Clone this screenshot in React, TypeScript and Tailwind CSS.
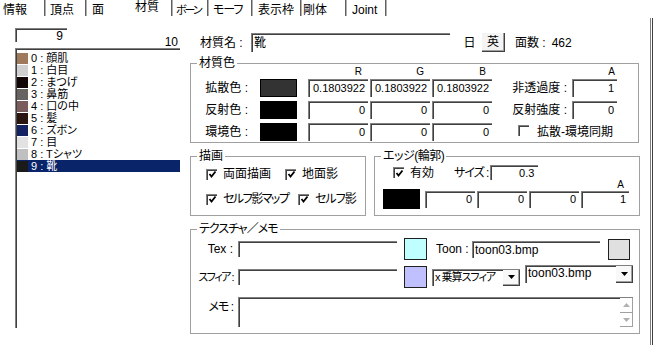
const sunken =
  "border-t border-l border-[#808080] shadow-[inset_1px_1px_0_#404040] bg-white";

const tabs = [
  { label: "情報", cls: "w-[44px] pl-[3px]", sep: true },
  { label: "頂点", cls: "w-[39px] pl-[4px]", sep: true },
  { label: "面", cls: "w-[48px] pl-[5px]", sep: false },
  { label: "材質", cls: "w-[36px] pl-0", sep: true, selected: true },
  { label: "ボーン", cls: "w-[34px] pl-[3px] text-[11px] tracking-[-2px]", sep: true },
  { label: "モーフ", cls: "w-[42px] pl-[4px] tracking-[-1px]", sep: true },
  { label: "表示枠", cls: "w-[47px] pl-[5px]", sep: true },
  { label: "剛体", cls: "w-[43px] pl-[1px]", sep: true },
  { label: "Joint", cls: "w-[38px] pl-[5px]", sep: true },
];

const materials = [
  { name: "顔肌", color: "#a07a5c" },
  { name: "白目", color: "#d0d0d0" },
  { name: "まつげ", color: "#120606" },
  { name: "鼻筋", color: "#686260" },
  { name: "口の中", color: "#7a5c5c" },
  { name: "髪", color: "#2a1410" },
  { name: "ズボン", color: "#142262" },
  { name: "目", color: "#e2e2e2" },
  { name: "Tシャツ", color: "#c0c0c0" },
  { name: "靴", color: "#1a1a1a" },
];

function Field({ value, className }: { value?: string; className: string }) {
  return (
    <div
      className={`${sunken} ${className} flex shrink-0 items-center justify-end pr-[3px] text-[11px] leading-none`}
    >
      {value}
    </div>
  );
}

function Check({ checked }: { checked?: boolean }) {
  return (
    <span className="inline-flex h-[11px] w-[11px] shrink-0 items-center justify-center border-t border-l border-[#808080] bg-white shadow-[inset_1px_1px_0_#404040]">
      {checked && (
        <svg width="9" height="9" viewBox="0 0 9 9">
          <path d="M1.5 4 L3.5 6.5 L7.5 1.5" fill="none" stroke="#000" strokeWidth="1.8" />
        </svg>
      )}
    </span>
  );
}

function Group({
  title,
  className,
  children,
  titleClass = "",
}: {
  title: string;
  className: string;
  children: React.ReactNode;
  titleClass?: string;
}) {
  return (
    <div className={`relative shrink-0 border border-[#a0a0a0] ${className}`}>
      <span
        className={`absolute top-[-8px] left-[6px] whitespace-nowrap bg-white px-[2px] leading-[14px] ${titleClass}`}
      >
        {title}
      </span>
      {children}
    </div>
  );
}

function Arrow({ color = "#000" }: { color?: string }) {
  return (
    <svg width="7" height="4" viewBox="0 0 7 4">
      <path d="M0 0 H7 L3.5 4 Z" fill={color} />
    </svg>
  );
}

function Combo({
  text,
  className,
  textClass = "",
}: {
  text: string;
  className: string;
  textClass?: string;
}) {
  return (
    <div className={`${sunken} ${className} flex shrink-0 items-stretch`}>
      <span className={`flex-1 overflow-hidden whitespace-nowrap pl-[2px] leading-[15px] ${textClass}`}>
        {text}
      </span>
      <span className="flex w-[17px] shrink-0 items-center justify-center border-r border-b border-[#404040] bg-[#f8f8f8] shadow-[inset_-1px_-1px_0_#a0a0a0]">
        <Arrow />
      </span>
    </div>
  );
}

export default function App() {
  return (
    <div className="h-[345px] w-[656px] overflow-hidden bg-white text-[12px] leading-[14px] text-black font-['Liberation_Sans','Noto_Sans_CJK_JP',sans-serif] [font-feature-settings:'palt']">
      {/* tab strip */}
      <div className="flex h-[18px] items-start">
        {tabs.map((t) => (
          <div key={t.label} className="flex items-start">
            <div className={`${t.cls} ${t.selected ? "pt-0" : "pt-[3px]"} whitespace-nowrap`}>
              {t.label}
            </div>
            {t.sep && <div className="h-[16px] w-[2px] border-l border-[#606060] border-r border-r-[#b0b0b0]" />}
          </div>
        ))}
      </div>

      <div className="flex h-[327px]">
        {/* material list */}
        <div className="ml-[15px] flex w-[165px] flex-col">
          <div className="mt-[10px] flex h-[20px] items-start justify-between">
            <div className={`${sunken} h-[14px] w-[52px] pr-[4px] text-right leading-[14px]`}>9</div>
            <div className="mt-[7px] pr-[2px]">10</div>
          </div>
          <div className={`${sunken} h-[280px] pt-[3px] pl-[1px]`}>
            {materials.map((m, i) => {
              const sel = i === 9;
              return (
                <div
                  key={m.name}
                  className={`flex h-[12px] items-center text-[11px] leading-[12px] ${sel ? "bg-[#0a246a] text-white" : ""}`}
                >
                  <span className="h-[11px] w-[11px] shrink-0" style={{ background: m.color }} />
                  <span className="ml-[3px] whitespace-nowrap">
                    {i} : {m.name}
                  </span>
                </div>
              );
            })}
          </div>
        </div>

        {/* properties */}
        <div className="ml-[10px] flex w-[450px] flex-col">
          <div className="mt-[15px] flex h-[19px] items-center">
            <span className="ml-[10px] w-[51px] whitespace-nowrap">材質名 :</span>
            <div className={`${sunken} h-[19px] w-[199px] pl-[2px] leading-[18px]`}>靴</div>
            <div className="ml-[7px] flex h-[19px] w-[25px] items-center justify-center">日</div>
            <div className="flex h-[19px] w-[23px] items-center justify-center border-r border-b border-[#404040] bg-[#f4f4f4] shadow-[inset_-1px_-1px_0_#a0a0a0]">
              英
            </div>
            <span className="ml-[10px]">面数 :</span>
            <span className="ml-[6px]">462</span>
          </div>

          <Group title="材質色" className="mt-[11px] h-[80px] w-[449px]">
            <div className="mt-[1px] flex h-[12px] items-end text-[10px] leading-[10px]">
              <div className="w-[117px] shrink-0" />
              <div className="w-[60px] pr-[6px] text-right">R</div>
              <div className="ml-[2px] w-[60px] pr-[6px] text-right">G</div>
              <div className="ml-[2px] w-[60px] pr-[6px] text-right">B</div>
              <div className="w-[80px] shrink-0" />
              <div className="w-[45px] pr-[2px] text-right">A</div>
            </div>
            <div className="mt-[2px] flex flex-col gap-[4px]">
              <div className="flex h-[18px] items-center">
                <span className="w-[57px] shrink-0 text-right">拡散色 :</span>
                <span className="ml-[12px] h-[18px] w-[37px] shrink-0 border border-black bg-[#333333]" />
                <Field value="0.1803922" className="ml-[11px] h-[18px] w-[60px]" />
                <Field value="0.1803922" className="ml-[2px] h-[18px] w-[60px]" />
                <Field value="0.1803922" className="ml-[2px] h-[18px] w-[60px]" />
                <span className="w-[76px] shrink-0 pr-[1px] text-right">非透過度 :</span>
                <Field value="1" className="ml-[4px] h-[18px] w-[45px]" />
              </div>
              <div className="flex h-[18px] items-center">
                <span className="w-[57px] shrink-0 text-right">反射色 :</span>
                <span className="ml-[12px] h-[18px] w-[37px] shrink-0 border border-black bg-black" />
                <Field value="0" className="ml-[11px] h-[18px] w-[60px]" />
                <Field value="0" className="ml-[2px] h-[18px] w-[60px]" />
                <Field value="0" className="ml-[2px] h-[18px] w-[60px]" />
                <span className="w-[76px] shrink-0 pr-[1px] text-right">反射強度 :</span>
                <Field value="0" className="ml-[4px] h-[18px] w-[45px]" />
              </div>
              <div className="flex h-[18px] items-center">
                <span className="w-[57px] shrink-0 text-right">環境色 :</span>
                <span className="ml-[12px] h-[18px] w-[37px] shrink-0 border border-black bg-black" />
                <Field value="0" className="ml-[11px] h-[18px] w-[60px]" />
                <Field value="0" className="ml-[2px] h-[18px] w-[60px]" />
                <Field value="0" className="ml-[2px] h-[18px] w-[60px]" />
                <span className="ml-[26px]">
                  <Check />
                </span>
                <span className="ml-[8px] whitespace-nowrap">拡散-環境同期</span>
              </div>
            </div>
          </Group>

          <div className="mt-[13px] flex">
            <Group title="描画" className="h-[60px] w-[176px]">
              <div className="pt-[10px] pl-[15px]">
                <div className="flex h-[14px] items-center">
                  <div className="flex w-[79px] items-center">
                    <Check checked />
                    <span className="ml-[6px] whitespace-nowrap">両面描画</span>
                  </div>
                  <Check checked />
                  <span className="ml-[6px] whitespace-nowrap">地面影</span>
                </div>
                <div className="mt-[11px] flex h-[14px] items-center">
                  <div className="flex w-[92px] items-center">
                    <Check checked />
                    <span className="ml-[6px] whitespace-nowrap tracking-[-1.5px]">セルフ影マップ</span>
                  </div>
                  <Check checked />
                  <span className="ml-[6px] whitespace-nowrap tracking-[-1px]">セルフ影</span>
                </div>
              </div>
            </Group>

            <Group title="エッジ(輪郭)" titleClass="tracking-[-0.5px]" className="ml-[8px] h-[60px] w-[266px]">
              <div className="mt-[8px] flex h-[15px] items-center pl-[18px]">
                <Check checked />
                <span className="ml-[6px]">有効</span>
                <span className="ml-[20px] whitespace-nowrap tracking-[-1px]">サイズ :</span>
                <Field value="0.3" className="ml-[2px] h-[15px] w-[48px] pr-[4px]" />
              </div>
              <div className="flex h-[9px] justify-end pr-[15px] text-[10px] leading-[9px]">A</div>
              <div className="flex h-[20px] items-center pl-[8px]">
                <span className="h-[20px] w-[37px] shrink-0 bg-black" />
                <Field value="0" className="ml-[5px] h-[17px] w-[50px]" />
                <Field value="0" className="ml-[2px] h-[17px] w-[50px]" />
                <Field value="0" className="ml-[2px] h-[17px] w-[50px]" />
                <Field value="1" className="ml-[2px] h-[17px] w-[48px]" />
              </div>
            </Group>
          </div>

          <Group title="テクスチャ／メモ" titleClass="tracking-[-1px]" className="mt-[13px] h-[105px] w-[450px]">
            <div className="mt-[8px] flex h-[22px] items-center">
              <span className="w-[42px] shrink-0 whitespace-nowrap text-right">Tex :</span>
              <div className={`${sunken} ml-[5px] h-[16px] w-[159px] shrink-0`} />
              <span className="ml-[7px] h-[22px] w-[23px] shrink-0 border border-[#202020] bg-[#c0ffff]" />
              <span className="ml-[9px] w-[36px] shrink-0 whitespace-nowrap">Toon :</span>
              <div className={`${sunken} h-[17px] w-[128px] shrink-0 pl-[2px] leading-[16px]`}>toon03.bmp</div>
              <span className="ml-[8px] h-[21px] w-[22px] shrink-0 border border-[#202020] bg-[#e0e0e0]" />
            </div>
            <div className="mt-[6px] flex h-[22px] items-center">
              <span className="w-[42px] shrink-0 whitespace-nowrap text-right text-[11px] tracking-[-1.5px]">スフィア :</span>
              <div className={`${sunken} ml-[5px] h-[16px] w-[159px] shrink-0`} />
              <span className="ml-[7px] h-[22px] w-[23px] shrink-0 border border-[#202020] bg-[#c0c0ff]" />
              <Combo
                text="x 乗算スフィア"
                textClass="text-[11px] tracking-[-1px]"
                className="ml-[5px] h-[17px] w-[88px]"
              />
              <Combo text="toon03.bmp" className="ml-[5px] -mt-[7px] h-[18px] w-[108px]" />
            </div>
            <div className="mt-[9px] flex h-[30px] items-start">
              <span className="w-[42px] shrink-0 pt-[3px] text-right tracking-[-1px]">メモ :</span>
              <div className={`${sunken} ml-[5px] flex h-[30px] w-[395px] justify-end`}>
                <div className="flex w-[13px] flex-col">
                  <div className="flex h-[15px] items-center justify-center border-r border-b border-[#a0a0a0] bg-white">
                    <span className="rotate-180">
                      <Arrow color="#b0b0b0" />
                    </span>
                  </div>
                  <div className="flex h-[14px] items-center justify-center border-r border-b border-[#a0a0a0] bg-white">
                    <Arrow color="#b0b0b0" />
                  </div>
                </div>
              </div>
            </div>
          </Group>
        </div>

        <div className="ml-[10px] h-full w-[3px] border-l border-[#808080] border-r border-r-[#404040]" />
      </div>
    </div>
  );
}
